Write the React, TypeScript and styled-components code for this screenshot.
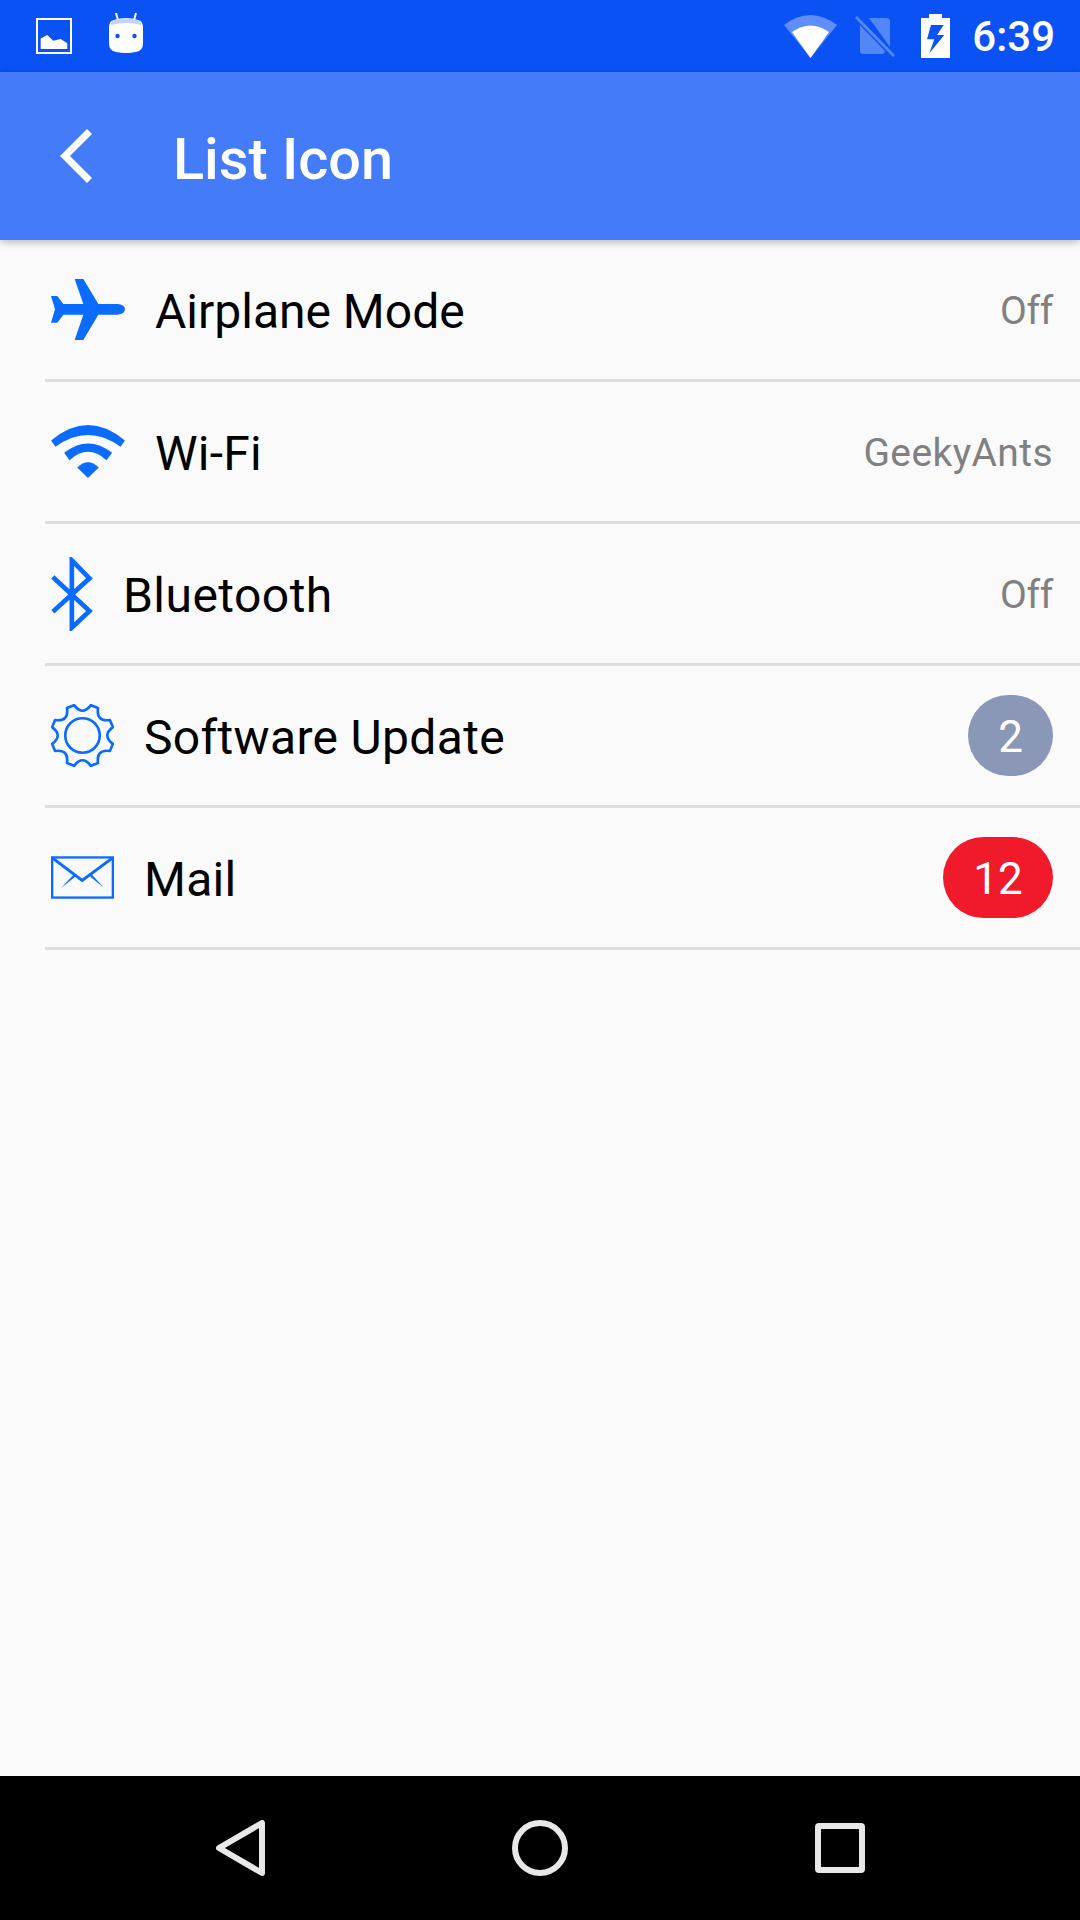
import React from 'react'
import styled, { createGlobalStyle } from 'styled-components'

const GlobalStyle = createGlobalStyle`
  html, body {
    margin: 0;
    padding: 0;
    background: #fafafa;
  }
`

const Screen = styled.div`
  width: 1080px;
  height: 1920px;
  display: flex;
  flex-direction: column;
  overflow: hidden;
  background: #fafafa;
  font-family: Roboto, "Liberation Sans", sans-serif;
`

const StatusBar = styled.div`
  height: 72px;
  flex: none;
  display: flex;
  align-items: center;
  background: #0a52f4;
  padding: 0 25px 0 36px;
`

const StatusLeft = styled.div`
  display: flex;
  align-items: center;
  gap: 37px;
  flex: 1;
`

const StatusRight = styled.div`
  display: flex;
  align-items: center;
`

const Clock = styled.span`
  margin-left: 22px;
  padding-top: 2px;
  color: #fff;
  font-size: 42px;
  font-weight: 500;
  line-height: 70px;
`

const StatusIcon = styled.svg<{ $gap?: number; $shift?: number }>`
  display: block;
  flex: none;
  margin-left: ${p => p.$gap || 0}px;
  transform: translateY(${p => p.$shift || 0}px);
`

const Header = styled.div`
  height: 168px;
  flex: none;
  position: relative;
  display: flex;
  align-items: center;
  background: #447bf8;
  padding-left: 60px;
  box-shadow: 0 2px 8px rgba(0, 0, 0, 0.28);
`

const BackIcon = styled.svg`
  display: block;
  flex: none;
`

const Title = styled.h1`
  margin: 0 0 0 81px;
  padding-top: 7px;
  color: #fff;
  font-size: 57.6px;
  font-weight: 500;
  line-height: 161px;
`

const List = styled.div`
  flex: 1;
`

const Row = styled.div`
  height: 139px;
  margin-left: 45px;
  padding: 0 27px 0 6px;
  display: flex;
  align-items: center;
  border-bottom: 3px solid #dddddd;
`

const IconSlot = styled.div`
  flex: none;
  display: flex;
  align-items: center;
`

const Label = styled.span<{ $gap: number; $spacing?: number }>`
  flex: 1;
  margin-left: ${p => p.$gap}px;
  padding-top: 3px;
  color: #000;
  font-size: 48px;
  letter-spacing: ${p => p.$spacing || 0}px;
`

const Note = styled.span<{ $spacing?: number }>`
  padding-top: 3px;
  color: #808080;
  font-size: 39px;
  letter-spacing: ${p => p.$spacing || 0}px;
`

const Badge = styled.span<{ $color: string; $wide?: boolean }>`
  height: 81px;
  box-sizing: border-box;
  min-width: ${p => (p.$wide ? 110 : 85)}px;
  padding-top: 2px;
  border-radius: 41px;
  display: flex;
  align-items: center;
  justify-content: center;
  background: ${p => p.$color};
  color: #fff;
  font-size: 44px;
`

const NavBar = styled.div`
  height: 144px;
  flex: none;
  display: flex;
  align-items: center;
  justify-content: space-between;
  background: #000;
  padding: 0 215px 0 216px;
`

const HomeIcon = styled.svg`
  margin-right: 1px;
`

const BLUE = '#0a6cff'

function gearPath() {
  const cx = 157
  const cy = 166
  const tip = 95
  const valley = 58
  let d = ''
  for (let k = 0; k < 8; k++) {
    const a = ((22.5 + k * 45) * Math.PI) / 180
    const s = (7 * Math.PI) / 180
    const b = a + Math.PI / 8
    const p1 = [cx + tip * Math.cos(a - s), cy + tip * Math.sin(a - s)]
    const p2 = [cx + tip * Math.cos(a + s), cy + tip * Math.sin(a + s)]
    const c = [cx + valley * Math.cos(b), cy + valley * Math.sin(b)]
    const a2 = a + Math.PI / 4
    const p3 = [cx + tip * Math.cos(a2 - s), cy + tip * Math.sin(a2 - s)]
    d += `${k === 0 ? 'M' : 'L'}${p1[0].toFixed(1)} ${p1[1].toFixed(1)} `
    d += `L${p2[0].toFixed(1)} ${p2[1].toFixed(1)} `
    d += `Q${c[0].toFixed(1)} ${c[1].toFixed(1)} ${p3[0].toFixed(1)} ${p3[1].toFixed(1)} `
  }
  return d + 'Z'
}

const AirplaneIcon = () => (
  <svg width="74" height="61" viewBox="63 57 222 183">
    <path
      fill={BLUE}
      d="M205 132L160 57H134L160 132H100L82 108H63L75 148L63 188H82L100 164H160L134 240H160L205 164H262Q285 162 285 148Q285 134 262 132Z"
    />
  </svg>
)

const WifiIcon = () => (
  <svg width="74" height="53" viewBox="63 495 220 158">
    <path fill={BLUE} d="M63 541Q173 449 283 541L270 560Q173 490 76 560Z" />
    <path fill={BLUE} d="M102 578Q173 522 245 578L228 600Q173 550 118 600Z" />
    <path fill={BLUE} d="M141 622Q173 590 205 622L173 653Z" />
  </svg>
)

const BluetoothIcon = () => (
  <svg width="42" height="74" viewBox="63 888 125 222">
    <path
      fill="none"
      stroke={BLUE}
      strokeWidth="14"
      d="M68 948L178 1050L125 1100V898L178 952L68 1052"
    />
  </svg>
)

const GearIcon = () => (
  <svg width="63" height="63" viewBox="62 71 190 190">
    <path fill="none" stroke={BLUE} strokeWidth="8" strokeLinejoin="round" d={gearPath()} />
    <circle cx="157" cy="166" r="52" fill="none" stroke={BLUE} strokeWidth="8" />
  </svg>
)

const MailIcon = () => (
  <svg width="63" height="43" viewBox="63 529 190 128">
    <rect x="66.5" y="532.5" width="183" height="121" fill="none" stroke={BLUE} strokeWidth="7" />
    <path fill="none" stroke={BLUE} strokeWidth="9" d="M66 533L157 602L250 533" />
    <path fill={BLUE} d="M131 585L137 590L94 624ZM181 590L187 585L222 624Z" />
  </svg>
)

type Item = {
  label: string
  icon: React.ReactNode
  gap: number
  spacing?: number
  note?: string
  noteSpacing?: number
  badge?: string
  color?: string
}

const items: Item[] = [
  { label: 'Airplane Mode', icon: <AirplaneIcon />, gap: 30, note: 'Off', noteSpacing: -0.3 },
  { label: 'Wi-Fi', icon: <WifiIcon />, gap: 30, spacing: 0.25, note: 'GeekyAnts', noteSpacing: 0.4 },
  { label: 'Bluetooth', icon: <BluetoothIcon />, gap: 30, spacing: 0.45, note: 'Off', noteSpacing: -0.3 },
  { label: 'Software Update', icon: <GearIcon />, gap: 30, spacing: 0.33, badge: '2', color: '#8b97b6' },
  { label: 'Mail', icon: <MailIcon />, gap: 30, spacing: 0.3, badge: '12', color: '#f01a2b' },
]

export default function App() {
  return (
    <Screen>
      <GlobalStyle />
      <StatusBar>
        <StatusLeft>
          <StatusIcon width="36" height="36" viewBox="0 0 36 36">
            <rect x="1" y="1" width="34" height="34" fill="none" stroke="#fff" strokeWidth="2" />
            <path fill="#fff" d="M4.7 31V20.5L11.3 17L17.3 22.7L24.7 21L31.3 25.3V31Z" />
          </StatusIcon>
          <StatusIcon width="34" height="41" viewBox="0 0 34 41" $shift={-3}>
            <path stroke="#fff" strokeWidth="2" d="M7 0L9.5 9M27 0L24.5 9" />
            <path
              fill="#fff"
              d="M5 7Q17 3 29 7Q34 8 34 14V30Q34 38 27 39Q17 41 7 39Q0 38 0 30V14Q0 8 5 7Z"
            />
            <path fill="#0a52f4" fillOpacity="0.25" d="M3 8Q17 3 31 8Q32 10 32 12Q17 8 2 12Q2 10 3 8Z" />
            <circle cx="8.5" cy="23" r="2.2" fill="#0a52f4" />
            <circle cx="25.5" cy="23" r="2.2" fill="#0a52f4" />
          </StatusIcon>
        </StatusLeft>
        <StatusRight>
          <StatusIcon width="53" height="43" viewBox="0 0 53 43">
            <path fill="#fff" fillOpacity="0.35" d="M0 10Q26 -10 53 10L26.5 43Z" />
            <path fill="#fff" d="M8 17Q26.5 4 45 17L26.5 43Z" />
          </StatusIcon>
          <StatusIcon width="40" height="41" viewBox="0 0 40 41" $gap={18}>
            <path fill="#fff" fillOpacity="0.3" d="M5 9L30 35Q30 38 26 38H8Q5 38 5 35Z" />
            <path fill="#fff" fillOpacity="0.3" d="M14 2H31Q35 2 35 5V31Z" />
            <path stroke="#fff" strokeOpacity="0.3" strokeWidth="3" d="M1 1L39 40" />
          </StatusIcon>
          <StatusIcon width="29" height="44" viewBox="0 0 29 44" $gap={26}>
            <path
              fill="#fff"
              fillRule="evenodd"
              d="M8 0H21V4H29V44H0V4H8ZM22.7 11H10L6 25.3H13.3L8.3 39.3L23.3 21H16Z"
            />
          </StatusIcon>
          <Clock>6:39</Clock>
        </StatusRight>
      </StatusBar>
      <Header>
        <BackIcon width="32" height="54" viewBox="0 0 32 54">
          <path fill="none" stroke="#fff" strokeWidth="7" d="M29.5 2.5L5 27L29.5 51.5" />
        </BackIcon>
        <Title>List Icon</Title>
      </Header>
      <List>
        {items.map(item => (
          <Row key={item.label}>
            <IconSlot>{item.icon}</IconSlot>
            <Label $gap={item.gap} $spacing={item.spacing}>
              {item.label}
            </Label>
            {item.note && <Note $spacing={item.noteSpacing}>{item.note}</Note>}
            {item.badge && (
              <Badge $color={item.color || '#000'} $wide={item.badge.length > 1}>
                {item.badge}
              </Badge>
            )}
          </Row>
        ))}
      </List>
      <NavBar>
        <svg width="50" height="56" viewBox="0 0 50 56">
          <path
            fill="none"
            stroke="#e8e8e8"
            strokeWidth="6"
            strokeLinejoin="round"
            d="M46 3V53L3 28Z"
          />
        </svg>
        <HomeIcon width="56" height="56" viewBox="0 0 56 56">
          <circle cx="28" cy="28" r="25" fill="none" stroke="#e8e8e8" strokeWidth="6" />
        </HomeIcon>
        <svg width="50" height="50" viewBox="0 0 50 50">
          <rect
            x="3"
            y="3"
            width="44"
            height="44"
            rx="1"
            fill="none"
            stroke="#e8e8e8"
            strokeWidth="6"
          />
        </svg>
      </NavBar>
    </Screen>
  )
}
